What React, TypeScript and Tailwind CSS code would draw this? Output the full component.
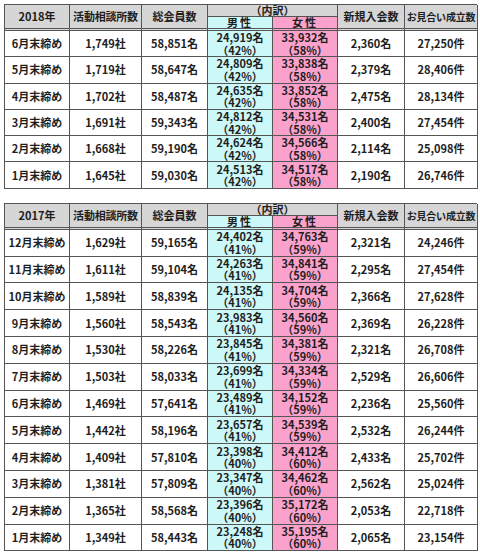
type Row = {
  month: string;
  offices: string;
  total: string;
  male: string;
  malePct: string;
  female: string;
  femalePct: string;
  newMembers: string;
  matches: string;
};

const data2018: Row[] = [
  { month: "6月末締め", offices: "1,749社", total: "58,851名", male: "24,919名", malePct: "42", female: "33,932名", femalePct: "58", newMembers: "2,360名", matches: "27,250件" },
  { month: "5月末締め", offices: "1,719社", total: "58,647名", male: "24,809名", malePct: "42", female: "33,838名", femalePct: "58", newMembers: "2,379名", matches: "28,406件" },
  { month: "4月末締め", offices: "1,702社", total: "58,487名", male: "24,635名", malePct: "42", female: "33,852名", femalePct: "58", newMembers: "2,475名", matches: "28,134件" },
  { month: "3月末締め", offices: "1,691社", total: "59,343名", male: "24,812名", malePct: "42", female: "34,531名", femalePct: "58", newMembers: "2,400名", matches: "27,454件" },
  { month: "2月末締め", offices: "1,668社", total: "59,190名", male: "24,624名", malePct: "42", female: "34,566名", femalePct: "58", newMembers: "2,114名", matches: "25,098件" },
  { month: "1月末締め", offices: "1,645社", total: "59,030名", male: "24,513名", malePct: "42", female: "34,517名", femalePct: "58", newMembers: "2,190名", matches: "26,746件" },
];

const data2017: Row[] = [
  { month: "12月末締め", offices: "1,629社", total: "59,165名", male: "24,402名", malePct: "41", female: "34,763名", femalePct: "59", newMembers: "2,321名", matches: "24,246件" },
  { month: "11月末締め", offices: "1,611社", total: "59,104名", male: "24,263名", malePct: "41", female: "34,841名", femalePct: "59", newMembers: "2,295名", matches: "27,454件" },
  { month: "10月末締め", offices: "1,589社", total: "58,839名", male: "24,135名", malePct: "41", female: "34,704名", femalePct: "59", newMembers: "2,366名", matches: "27,628件" },
  { month: "9月末締め", offices: "1,560社", total: "58,543名", male: "23,983名", malePct: "41", female: "34,560名", femalePct: "59", newMembers: "2,369名", matches: "26,228件" },
  { month: "8月末締め", offices: "1,530社", total: "58,226名", male: "23,845名", malePct: "41", female: "34,381名", femalePct: "59", newMembers: "2,321名", matches: "26,708件" },
  { month: "7月末締め", offices: "1,503社", total: "58,033名", male: "23,699名", malePct: "41", female: "34,334名", femalePct: "59", newMembers: "2,529名", matches: "26,606件" },
  { month: "6月末締め", offices: "1,469社", total: "57,641名", male: "23,489名", malePct: "41", female: "34,152名", femalePct: "59", newMembers: "2,236名", matches: "25,560件" },
  { month: "5月末締め", offices: "1,442社", total: "58,196名", male: "23,657名", malePct: "41", female: "34,539名", femalePct: "59", newMembers: "2,532名", matches: "26,244件" },
  { month: "4月末締め", offices: "1,409社", total: "57,810名", male: "23,398名", malePct: "40", female: "34,412名", femalePct: "60", newMembers: "2,433名", matches: "25,702件" },
  { month: "3月末締め", offices: "1,381社", total: "57,809名", male: "23,347名", malePct: "40", female: "34,462名", femalePct: "60", newMembers: "2,562名", matches: "25,024件" },
  { month: "2月末締め", offices: "1,365社", total: "58,568名", male: "23,396名", malePct: "40", female: "35,172名", femalePct: "60", newMembers: "2,053名", matches: "22,718件" },
  { month: "1月末締め", offices: "1,349社", total: "58,443名", male: "23,248名", malePct: "40", female: "35,195名", femalePct: "60", newMembers: "2,065名", matches: "23,154件" },
];

const cell = "flex items-center justify-center whitespace-nowrap border-r border-b border-[#555]";
const head = "flex items-center justify-center whitespace-nowrap border-r border-[#555] bg-[#d6d6d6]";
const headTall = `${head} row-span-2 border-b-[3px] border-double`;

function StatsTable({ year, rows, rowH }: { year: string; rows: Row[]; rowH: string }) {
  return (
    <div className="grid w-[473px] grid-cols-[65px_72px_66px_65px_65px_67px_73px] grid-rows-[12px_14px] border-l border-t border-[#555] text-[11px] font-bold leading-[13px] text-[#1e1e1e]">
      <div className={headTall}>{year}</div>
      <div className={`${headTall} tracking-[-0.2px]`}>活動相談所数</div>
      <div className={headTall}>総会員数</div>
      <div className={`${head} col-span-2 border-b`}>（内訳）</div>
      <div className={headTall}>新規入会数</div>
      <div className={`${headTall} text-[10px] tracking-[-0.2px]`}>お見合い成立数</div>
      <div className="col-start-4 row-start-2 flex items-center justify-center border-r border-b-[3px] border-double border-[#555] bg-[#cdf8f8] tracking-[2px]">男性</div>
      <div className="col-start-5 row-start-2 flex items-center justify-center border-r border-b-[3px] border-double border-[#555] bg-[#fba2cc] tracking-[2px]">女性</div>
      {rows.map((r) => (
        <div key={r.month} className="contents">
          <div className={`${cell} ${rowH}`}>{r.month}</div>
          <div className={`${cell} ${rowH}`}>{r.offices}</div>
          <div className={`${cell} ${rowH}`}>{r.total}</div>
          <div className={`${cell} ${rowH} flex-col bg-[#cdf8f8] leading-[12.5px]`}>
            <span>{r.male}</span>
            <span>（{r.malePct}%）</span>
          </div>
          <div className={`${cell} ${rowH} flex-col bg-[#fba2cc] leading-[12.5px]`}>
            <span>{r.female}</span>
            <span>（{r.femalePct}%）</span>
          </div>
          <div className={`${cell} ${rowH}`}>{r.newMembers}</div>
          <div className={`${cell} ${rowH}`}>{r.matches}</div>
        </div>
      ))}
    </div>
  );
}

export default function App() {
  return (
    <div
      className="flex h-[555px] w-[480px] flex-col gap-[14px] bg-white pl-[4px] pt-[4px]"
      style={{ fontFamily: '"Noto Sans CJK JP", "Noto Sans", sans-serif' }}
    >
      <StatsTable year="2018年" rows={data2018} rowH="h-[26.3px]" />
      <StatsTable year="2017年" rows={data2017} rowH="h-[26.8px]" />
    </div>
  );
}
